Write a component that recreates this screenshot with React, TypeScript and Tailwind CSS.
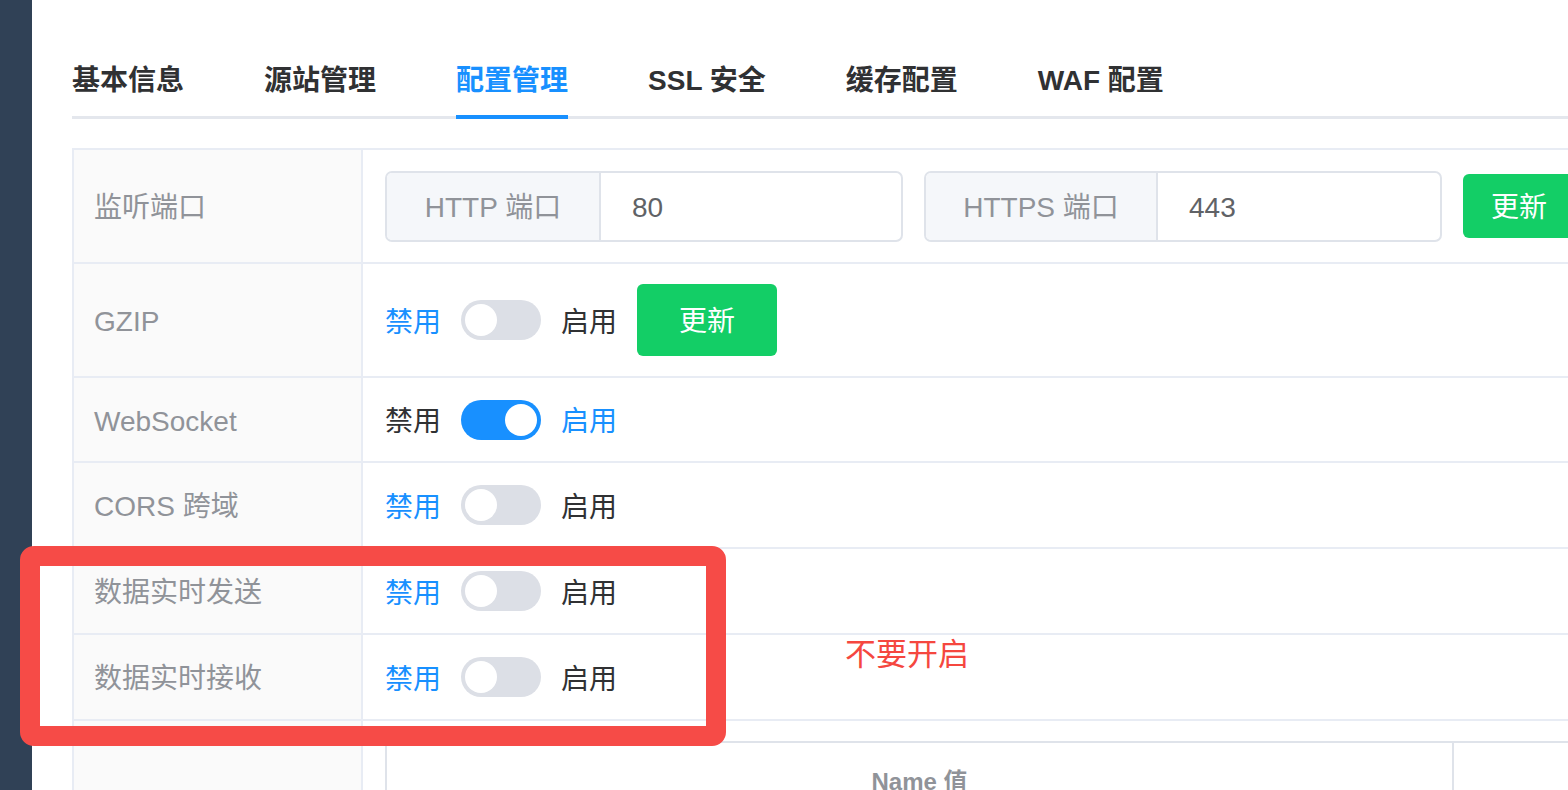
import React from "react";

function Toggle({ on }: { on: boolean }) {
  return (
    <div
      className={`relative w-[80px] h-[40px] rounded-full shrink-0 ${
        on ? "bg-[#1890ff]" : "bg-[#dcdfe6]"
      }`}
    >
      <div
        className={`absolute top-[4px] w-[32px] h-[32px] rounded-full bg-white ${
          on ? "left-[44px]" : "left-[4px]"
        }`}
      />
    </div>
  );
}

function SwitchRow({ on, button }: { on: boolean; button?: boolean }) {
  return (
    <div className="flex items-center gap-[20px] text-[28px]">
      <span className={`pt-[5px] ${on ? "text-[#303133]" : "text-[#1890ff]"}`}>禁用</span>
      <Toggle on={on} />
      <span className={`pt-[5px] ${on ? "text-[#1890ff]" : "text-[#303133]"}`}>启用</span>
      {button && (
        <button className="w-[140px] h-[72px] rounded-[6px] bg-[#13ce66] text-white text-[28px] pt-[3px]">
          更新
        </button>
      )}
    </div>
  );
}

function Row({
  label,
  h,
  children,
}: {
  label: string;
  h: string;
  children: React.ReactNode;
}) {
  return (
    <div className={`flex border-b-2 border-[#e8ecf4] ${h}`}>
      <div className="w-[289px] shrink-0 bg-[#fafafa] border-r-2 border-[#e8ecf4] flex items-center pl-[20px] pt-[4px] text-[28px] text-[#909399]">
        {label}
      </div>
      <div className="flex-1 flex items-center pl-[22px]">{children}</div>
    </div>
  );
}

function PortInput({
  label,
  value,
  addonW,
}: {
  label: string;
  value: string;
  addonW: string;
}) {
  return (
    <div className="flex w-[518px] h-[71px] border-2 border-[#dfe3ea] rounded-[7px] overflow-hidden shrink-0">
      <div
        className={`${addonW} shrink-0 bg-[#f5f7fa] border-r-2 border-[#dfe3ea] flex items-center justify-center pt-[3px] text-[28px] text-[#909399]`}
      >
        {label}
      </div>
      <div className="flex-1 flex items-center pl-[31px] pt-[3px] text-[28px] text-[#606266]">
        {value}
      </div>
    </div>
  );
}

export default function App() {
  return (
    <div className="relative flex h-[790px] w-full overflow-hidden bg-white [font-family:Liberation_Sans,Noto_Sans_CJK_SC,sans-serif]">
      <div className="w-[32px] shrink-0 bg-[#304156]" />
      <div className="flex-1 overflow-hidden pl-[40px] pt-[40px]">
        <div className="w-[1540px]">
          <div className="flex border-b-[3px] border-[#e4e7ed] h-[79px]">
            {["基本信息", "源站管理", "配置管理", "SSL 安全", "缓存配置", "WAF 配置"].map(
              (t, i) => (
                <div
                  key={t}
                  className={`relative flex items-center h-[76px] pt-[6px] text-[28px] font-semibold ${
                    i === 0 ? "pr-[40px]" : "px-[40px]"
                  } ${i === 2 ? "text-[#1890ff]" : "text-[#303133]"}`}
                >
                  {t}
                  {i === 2 && (
                    <div className="absolute left-[40px] right-[40px] bottom-[-3px] h-[4px] bg-[#1890ff]" />
                  )}
                </div>
              )
            )}
          </div>

          <div className="mt-[29px] border-2 border-b-0 border-[#e8ecf4]">
            <Row label="监听端口" h="h-[114px]">
              <div className="flex items-center gap-[21px]">
                <PortInput label="HTTP 端口" value="80" addonW="w-[214px]" />
                <PortInput label="HTTPS 端口" value="443" addonW="w-[232px]" />
                <button className="w-[112px] h-[64px] rounded-[6px] bg-[#13ce66] text-white text-[28px] pt-[3px] shrink-0">
                  更新
                </button>
              </div>
            </Row>
            <Row label="GZIP" h="h-[114px]">
              <SwitchRow on={false} button />
            </Row>
            <Row label="WebSocket" h="h-[85px]">
              <SwitchRow on={true} />
            </Row>
            <Row label="CORS 跨域" h="h-[86px]">
              <SwitchRow on={false} />
            </Row>
            <Row label="数据实时发送" h="h-[86px]">
              <SwitchRow on={false} />
            </Row>
            <Row label="数据实时接收" h="h-[86px]">
              <SwitchRow on={false} />
            </Row>
            <div className="flex h-[200px]">
              <div className="w-[289px] shrink-0 bg-[#fafafa] border-r-2 border-[#e8ecf4]" />
              <div className="flex-1 pl-[22px] pt-[20px]">
                <div className="flex border-2 border-[#dfe3ea] h-[200px]">
                  <div className="w-[1067px] shrink-0 border-r-2 border-[#dfe3ea] h-[76px] flex items-center justify-center pt-[2px] text-[24px] font-bold text-[#909399]">
                    Name 值
                  </div>
                  <div className="flex-1" />
                </div>
              </div>
            </div>
          </div>
        </div>
      </div>

      <div className="absolute left-[20px] top-[546px] w-[706px] h-[200px] border-[20px] border-[#f64b47] rounded-[14px] pointer-events-none" />
      <div className="absolute left-[845px] top-[637px] text-[31px] leading-[36px] text-[#f5473f]">
        不要开启
      </div>
    </div>
  );
}
